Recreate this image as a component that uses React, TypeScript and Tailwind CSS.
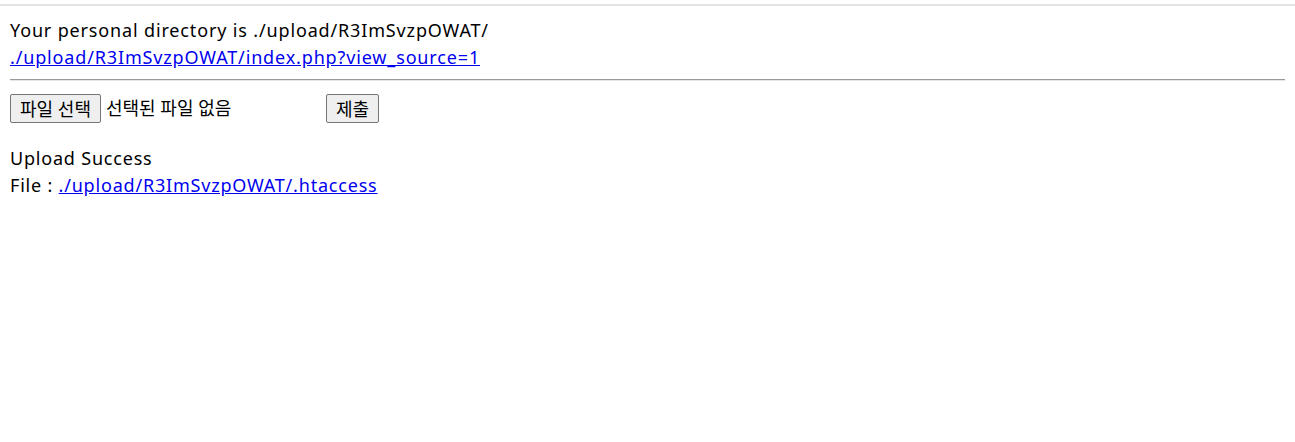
import React from 'react';

const font = { fontFamily: '"Noto Sans", "Noto Sans CJK KR", sans-serif' };

const App: React.FC = () => {
  return (
    <div className="min-h-screen bg-white text-black text-[18px]" style={font}>
      <div className="h-[4px]" />
      <div className="h-[2px] bg-[#e3e3e3]" />
      <div className="px-[10px] pt-[11px]">
        <div className="leading-[27px] tracking-[0.85px]">
          <div>Your personal directory is ./upload/R3ImSvzpOWAT/</div>
          <a href="#" className="text-[#0000ee] underline">
            ./upload/R3ImSvzpOWAT/index.php?view_source=1
          </a>
        </div>
        <div className="mt-[8px] h-[2px] border-t border-t-[#9a9a9a] border-b border-b-[#e6e6e6]" />
        <div className="mt-[13px] flex items-center h-[29px]">
          <div className="flex items-center w-[316px]">
            <button className="h-[29px] w-[91px] bg-[#efefef] border border-[#767676] rounded-[2px] leading-none">
              파일 선택
            </button>
            <span className="ml-[5px]">선택된 파일 없음</span>
          </div>
          <button className="h-[29px] w-[53px] bg-[#efefef] border border-[#767676] rounded-[2px] leading-none">
            제출
          </button>
        </div>
        <div className="mt-[22px] leading-[27px] tracking-[0.8px]">
          <div>Upload Success</div>
          <div>
            File : <a href="#" className="text-[#0000ee] underline">./upload/R3ImSvzpOWAT/.htaccess</a>
          </div>
        </div>
      </div>
    </div>
  );
};

export default App;
